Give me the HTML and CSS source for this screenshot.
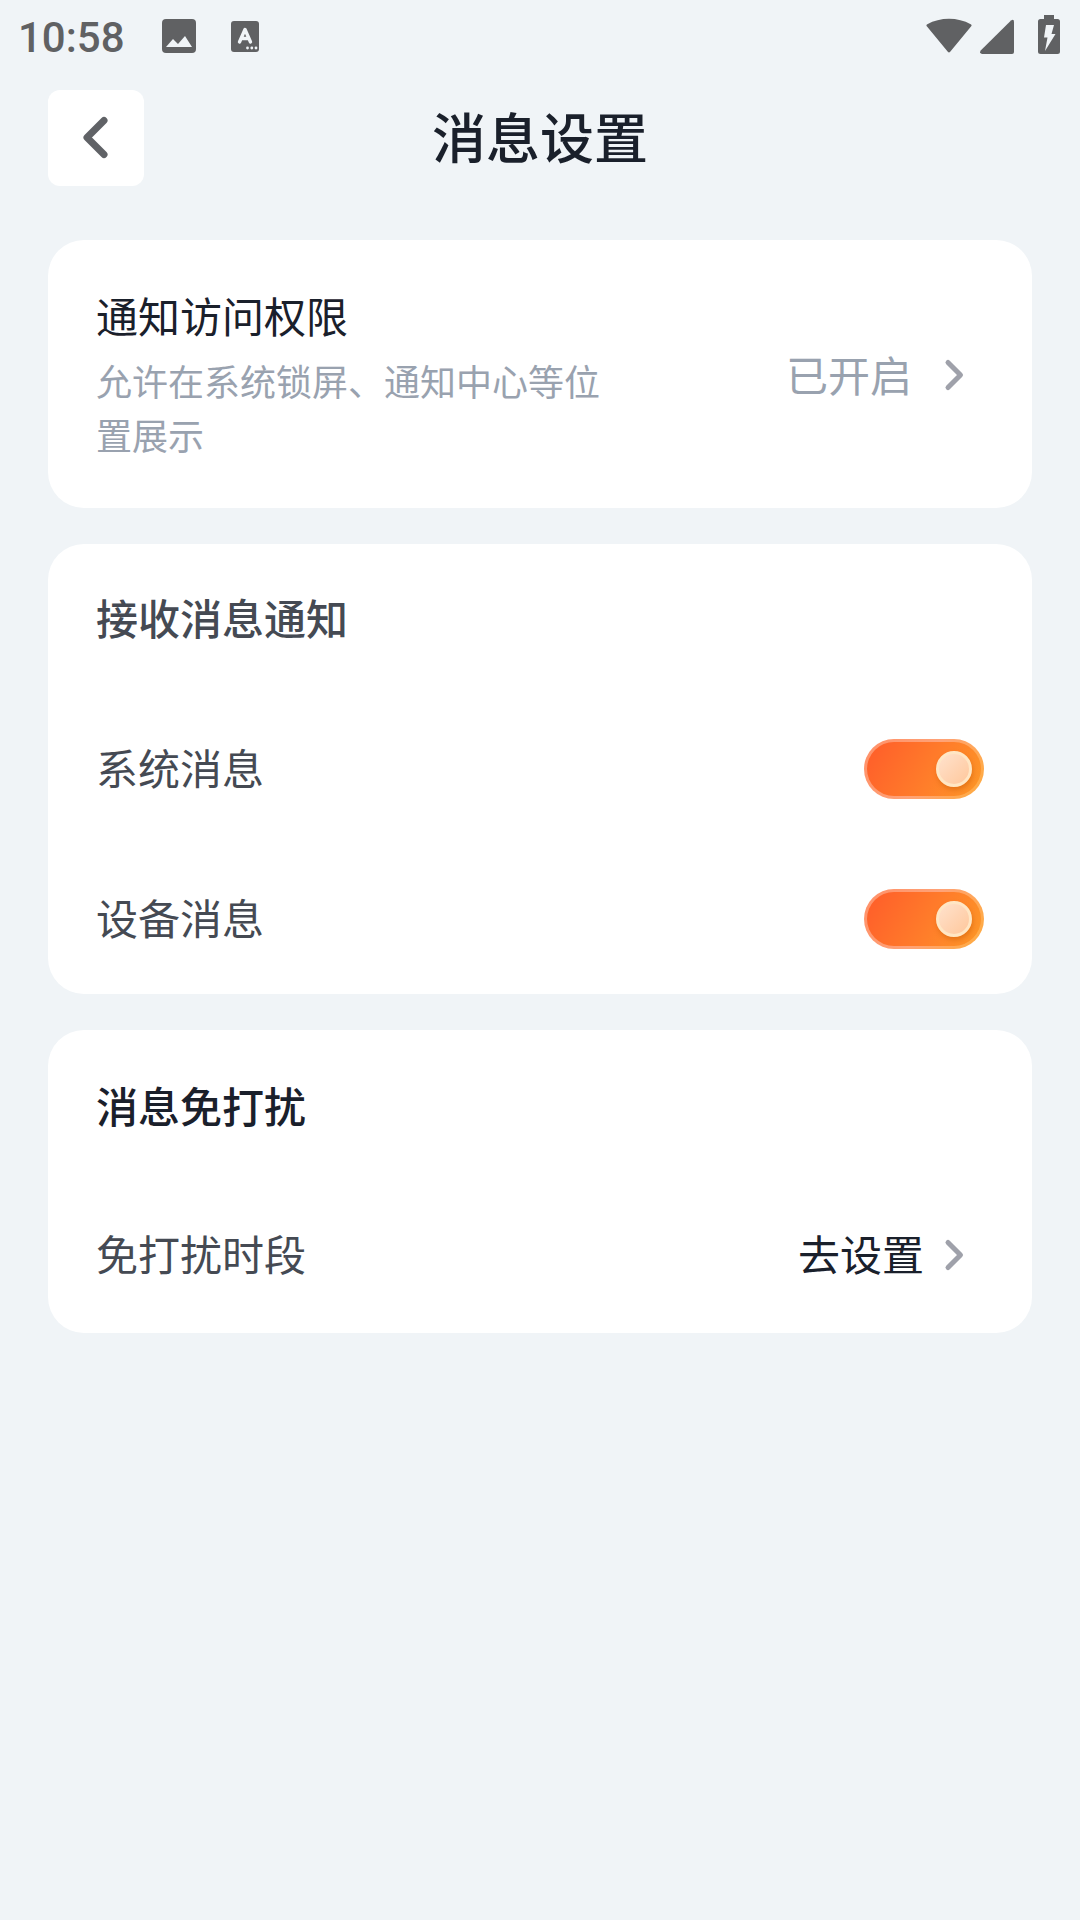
FILE: index.html
```html
<!DOCTYPE html>
<html lang="zh-CN">
<head>
  <meta charset="utf-8">
  <meta name="viewport" content="width=device-width, initial-scale=1">
  <title>消息设置</title>
  <link rel="stylesheet" href="styles.css">
</head>
<body>
  <div class="status-bar">
    <div class="status-left">
      <time class="clock">10:58</time>
      <svg class="icon-photo" width="34" height="34" viewBox="0 0 34 34" aria-hidden="true">
        <rect width="34" height="34" rx="4" fill="#606163"/>
        <path d="M4 28L11 20L16 25L23 17L30 28Z" fill="#f0f4f7"/>
      </svg>
      <svg class="icon-input" width="28" height="31" viewBox="0 0 28 31" aria-hidden="true">
        <rect width="28" height="31" rx="3" fill="#606163"/>
        <path d="M8.500 21L14 8.500L19.500 21M10.500 17.500H17.500" fill="none" stroke="#f0f4f7" stroke-width="3.400" stroke-linecap="round" stroke-linejoin="round"/>
        <circle cx="16.500" cy="27" r="1.400" fill="#f0f4f7"/>
        <circle cx="20.800" cy="27" r="1.400" fill="#f0f4f7"/>
        <circle cx="25" cy="27" r="1.400" fill="#f0f4f7"/>
      </svg>
    </div>
    <div class="status-right">
      <svg class="icon-wifi" width="46" height="40" viewBox="0 0 46 40" aria-hidden="true">
        <path d="M1 9.500Q-.3 8.300 1.300 7.200C14-.2 32-.2 44.700 7.200Q46.300 8.300 45 9.500L24.200 34.800Q23 36.200 21.800 34.800Z" transform="translate(0 2)" fill="#606163"/>
      </svg>
      <svg class="icon-signal" width="34" height="40" viewBox="0 0 34 40" aria-hidden="true">
        <path d="M.7 35.500L31 5.500Q34 3.500 34 7V37Q34 39 32 39H2Q-1 38.500 .7 35.500Z" fill="#606163"/>
      </svg>
      <svg class="icon-battery" width="22" height="40" viewBox="0 0 22 40" aria-hidden="true">
        <path d="M6 0H16V4H19.500Q22 4 22 6.500V36.500Q22 39 19.500 39H2.500Q0 39 0 36.500V6.500Q0 4 2.500 4H6Z" fill="#606163"/>
        <path d="M8 10H16L13.500 19H17.500L7 36L9.500 22.500H6Z" fill="#f0f4f7"/>
      </svg>
    </div>
  </div>

  <header class="header">
    <button class="back" type="button" aria-label="返回">
      <svg width="48" height="48" viewBox="0 0 48 48" aria-hidden="true">
        <path d="M32 6.500L15 23.500L32 40.500" fill="none" stroke="#606266" stroke-width="7" stroke-linecap="round" stroke-linejoin="round"/>
      </svg>
    </button>
    <h1 class="title">消息设置</h1>
  </header>

  <main class="content">
    <button class="card permission" type="button">
      <span class="permission-text">
        <span class="permission-title">通知访问权限</span>
        <span class="permission-note">允许在系统锁屏、通知中心等位置展示</span>
      </span>
      <span class="action action-wide">
        <span class="value-muted">已开启</span>
        <svg class="chevron" width="36" height="36" viewBox="0 0 36 36" aria-hidden="true">
          <path d="M12 5.500L24.500 18L12 30.500" fill="none" stroke="#9fa1aa" stroke-width="5" stroke-linecap="round" stroke-linejoin="round"/>
        </svg>
      </span>
    </button>

    <section class="card">
      <h2 class="row heading heading-soft">接收消息通知</h2>
      <label class="row">
        <span class="label">系统消息</span>
        <input class="switch" type="checkbox" checked>
      </label>
      <label class="row">
        <span class="label">设备消息</span>
        <input class="switch" type="checkbox" checked>
      </label>
    </section>

    <section class="card quiet">
      <h2 class="row heading">消息免打扰</h2>
      <button class="row" type="button">
        <span class="label">免打扰时段</span>
        <span class="action">
          <span class="label value">去设置</span>
          <svg class="chevron" width="36" height="36" viewBox="0 0 36 36" aria-hidden="true">
            <path d="M12 5.500L24.500 18L12 30.500" fill="none" stroke="#9fa1aa" stroke-width="5" stroke-linecap="round" stroke-linejoin="round"/>
          </svg>
        </span>
      </button>
    </section>
  </main>
</body>
</html>
```
FILE: styles.css
```css
:root {
  --ink: #1a202b;
  --soft: #454a53;
  --muted: #99a2af;
  --page: #f0f4f7;
}

*,
*::before {
  box-sizing: border-box;
}

body {
  margin: 0;
  min-height: 100vh;
  background: var(--page);
  color: var(--ink);
  font-family: "Noto Sans CJK SC", "Noto Sans", sans-serif;
  font-size: 42px;
  line-height: 54px;
}

h1,
h2 {
  margin: 0;
}

button {
  border: 0;
  padding: 0;
  background: none;
  color: inherit;
  font: inherit;
  text-align: left;
  cursor: pointer;
}

svg {
  display: block;
  flex: none;
}

/* Status bar */
.status-bar {
  display: flex;
  justify-content: space-between;
  align-items: center;
  height: 72px;
  padding: 0 20px 0 18px;
}

.status-left,
.status-right {
  display: flex;
  align-items: center;
}

.status-right {
  padding-bottom: 2px;
}

.clock {
  padding-top: 3px;
  color: #606163;
  font-family: Roboto, sans-serif;
  font-weight: 500;
}

.icon-photo {
  margin-left: 37px;
}

.icon-input {
  margin-left: 35px;
}

.icon-signal {
  margin-left: 8px;
}

.icon-battery {
  margin-left: 24px;
}

/* Header */
.header {
  display: grid;
  grid-template-columns: 96px 1fr 96px;
  align-items: center;
  padding: 18px 48px 54px;
}

.back {
  display: flex;
  align-items: center;
  justify-content: center;
  height: 96px;
  border-radius: 12px;
  background: #fff;
}

.title {
  padding-bottom: 4px;
  font-size: 54px;
  font-weight: 500;
  line-height: 72px;
  text-align: center;
}

/* Cards */
.content {
  display: flex;
  flex-direction: column;
  gap: 36px;
  padding: 0 48px 48px;
}

.card {
  border-radius: 36px;
  background: #fff;
}

.permission {
  display: flex;
  align-items: center;
  justify-content: space-between;
  padding: 48px 48px 47px;
}

.permission-text {
  display: flex;
  flex-direction: column;
  gap: 11px;
  max-width: 520px;
}

.permission-note {
  color: var(--muted);
  font-size: 36px;
}

.quiet {
  padding-bottom: 3px;
}

.row {
  display: flex;
  align-items: center;
  justify-content: space-between;
  width: 100%;
  height: 150px;
  padding: 0 48px;
  color: var(--soft);
}

.label {
  padding-bottom: 4px;
}

.heading {
  color: var(--ink);
  font-size: 42px;
  font-weight: 500;
}

.heading-soft {
  padding-bottom: 4px;
  color: var(--soft);
}

.action {
  display: flex;
  align-items: center;
  gap: 12px;
  padding-right: 12px;
}

.action-wide {
  gap: 24px;
}

.value {
  color: var(--ink);
}

.value-muted {
  padding-bottom: 2px;
  color: var(--muted);
}

/* Switch */
.switch {
  appearance: none;
  display: flex;
  align-items: center;
  flex: none;
  width: 120px;
  height: 60px;
  margin: 0;
  padding: 0 9px;
  border: 3px solid transparent;
  border-radius: 30px;
  background: #d5d9de;
  cursor: pointer;
}

.switch:checked {
  justify-content: flex-end;
  background:
    linear-gradient(120deg, #ff622a 10%, #ff7f2a 60%, #fd9527 95%) padding-box,
    linear-gradient(120deg, #ff9068, #ffa277 50%, #ffac3c) border-box;
}

.switch::before {
  content: "";
  width: 36px;
  height: 36px;
  border: 3px solid #ffe6c4;
  border-radius: 50%;
  background: linear-gradient(135deg, #ffe2cd, #ffc79b);
  box-shadow: 1px 3px 5px rgba(190, 80, 0, 0.4);
}
```
